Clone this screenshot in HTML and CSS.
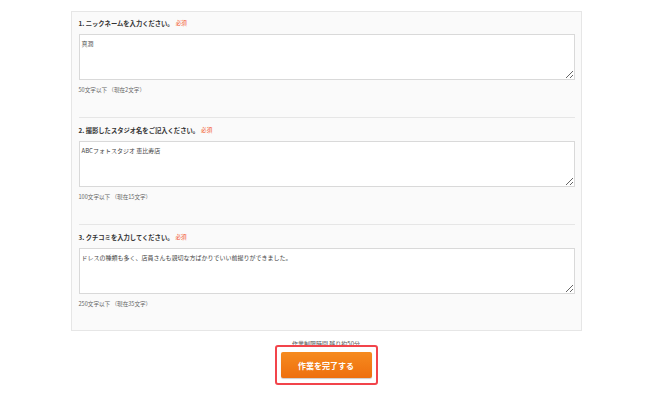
FILE: index.html
```html
<!DOCTYPE html>
<html lang="ja">
<head>
    <meta charset="UTF-8">
    <meta name="viewport" content="width=device-width, initial-scale=1.0">
    <title>クチコミ投稿</title>
    <link rel="stylesheet" href="styles.css">
</head>
<body>
    <div class="form-panel">
        <div class="question">
            <p class="question-label">1. ニックネームを入力ください。<span class="required">必須</span></p>
            <textarea class="answer">真潤</textarea>
            <p class="hint">50文字以下 （現在2文字）</p>
        </div>
        <div class="question">
            <p class="question-label">2. 撮影したスタジオ名をご記入ください。<span class="required">必須</span></p>
            <textarea class="answer">ABCフォトスタジオ 恵比寿店</textarea>
            <p class="hint">100文字以下 （現在15文字）</p>
        </div>
        <div class="question">
            <p class="question-label">3. クチコミを入力してください。<span class="required">必須</span></p>
            <textarea class="answer">ドレスの種類も多く、店員さんも親切な方ばかりでいい前撮りができました。</textarea>
            <p class="hint">250文字以下 （現在35文字）</p>
        </div>
    </div>

    <div class="footer">
        <p class="time-limit">作業制限時間 残り約50分</p>
        <div class="highlight">
            <button class="complete-button">作業を完了する</button>
        </div>
    </div>
</body>
</html>
```

FILE: styles.css
```css
body {
    margin: 0;
    background-color: #fff;
    color: #333;
    font-family: "Noto Sans CJK JP", "Noto Sans", sans-serif;
}

.form-panel {
    width: 496px;
    margin: 11px auto 0;
    padding: 0 6px 0 7px;
    background-color: #fafafa;
    border: 1px solid #e6e6e6;
}

.question {
    padding: 8px 0 24px;
    border-bottom: 1px solid #e6e6e6;
}

.question + .question {
    padding-top: 9px;
}

.question:last-child {
    border-bottom: none;
    padding-bottom: 23px;
}

.question-label {
    display: flex;
    align-items: center;
    height: 7px;
    margin: 0 0 7px;
    font-size: 6.3px;
    line-height: 7px;
    font-weight: bold;
    color: #333;
}

.required {
    margin-left: 2px;
    font-size: 5.6px;
    line-height: 7px;
    font-weight: normal;
    color: #f2552c;
}

.answer {
    display: block;
    box-sizing: border-box;
    width: 100%;
    height: 46px;
    margin: 0;
    padding: 4px 2px;
    border: 1px solid #d9d9d9;
    border-radius: 0;
    background-color: #fff;
    font-family: "Noto Sans CJK JP", "Noto Sans", sans-serif;
    font-size: 6px;
    line-height: 9px;
    color: #444;
    resize: vertical;
}

.hint {
    margin: 7px 0 0;
    font-size: 5.6px;
    line-height: 6px;
    color: #666;
}

.footer {
    display: flex;
    flex-direction: column;
    align-items: center;
}

.time-limit {
    margin: 9px 0 0;
    font-size: 6px;
    line-height: 7px;
    color: #555;
}

.highlight {
    margin-top: -2px;
    padding: 5px 4px;
    border: 2px solid #f2444b;
    border-radius: 3px;
    background-color: #fff;
}

.complete-button {
    display: block;
    width: 91px;
    height: 26px;
    padding: 0;
    border: none;
    border-radius: 2px;
    background-image: linear-gradient(#f68b1f, #ee6f0e);
    box-shadow: 0 1px 1px rgba(0, 0, 0, 0.2);
    color: #fff;
    font-family: "Noto Sans CJK JP", "Noto Sans", sans-serif;
    font-size: 8px;
    font-weight: bold;
    cursor: pointer;
}
```
